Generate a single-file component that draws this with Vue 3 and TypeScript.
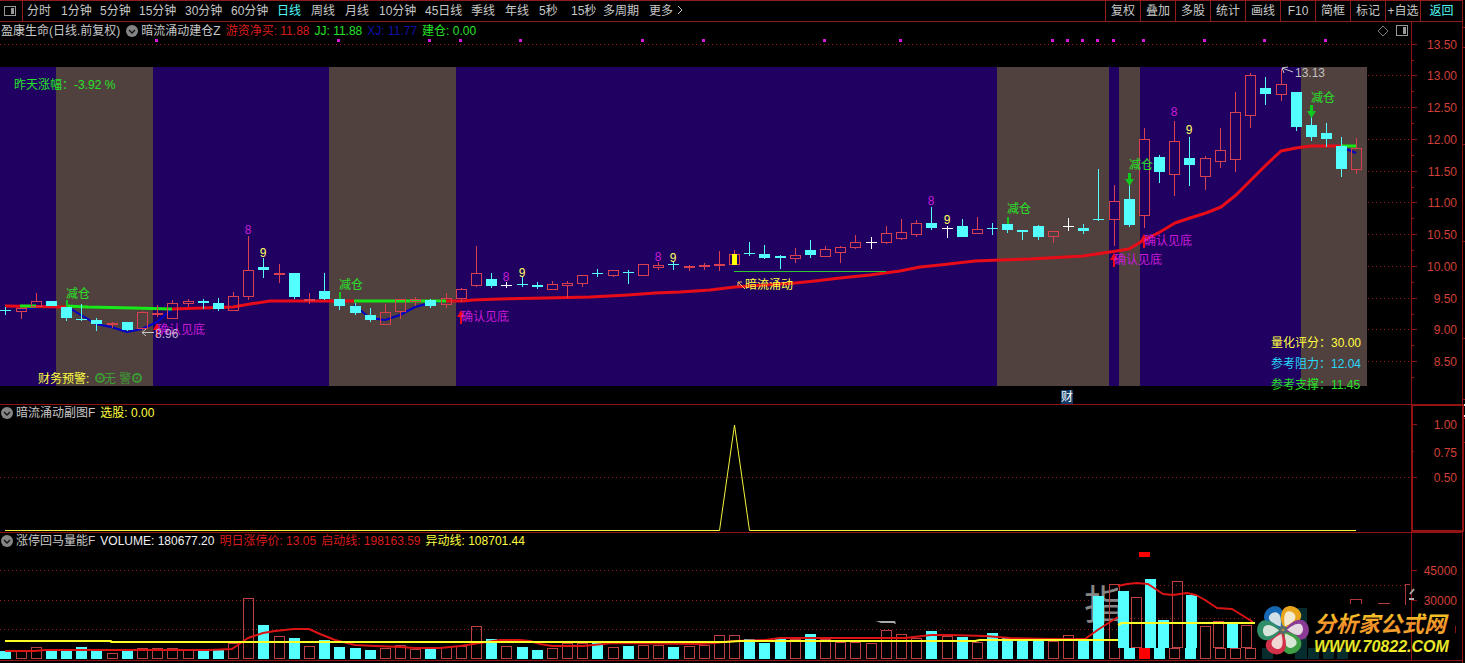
<script setup lang="ts">
type Kind = 'up' | 'down' | 'flat'
type Candle = [kind: Kind, high: number, top: number, bottom: number, low: number]
interface Bar { x: number; top: number; bottom: number; kind: Kind }

const STEP = 15.18
const centre = (i: number): number => Math.round(5.4 + i * STEP)

const periods = [
  { label: '分时', size: 'short' }, { label: '1分钟', size: 'mid' }, { label: '5分钟', size: 'mid' },
  { label: '15分钟', size: 'long' }, { label: '30分钟', size: 'long' }, { label: '60分钟', size: 'long' },
  { label: '日线', size: 'short', active: true }, { label: '周线', size: 'short' }, { label: '月线', size: 'short' },
  { label: '10分钟', size: 'long' }, { label: '45日线', size: 'long' }, { label: '季线', size: 'short' },
  { label: '年线', size: 'short' }, { label: '5秒', size: 'tight' }, { label: '15秒', size: 'tight' },
  { label: '多周期', size: 'long' }, { label: '更多', size: 'more' }
]
const tools = ['复权', '叠加', '多股', '统计', '画线', 'F10', '简框', '标记', '+自选']

const priceAxis = [
  { y: 44, label: '13.50' }, { y: 75, label: '13.00' }, { y: 107, label: '12.50' }, { y: 139, label: '12.00' },
  { y: 171, label: '11.50' }, { y: 202, label: '11.00' }, { y: 234, label: '10.50' }, { y: 266, label: '10.00' },
  { y: 298, label: '9.50' }, { y: 329, label: '9.00' }, { y: 361, label: '8.50' }
]
const bands = [[56, 97], [329, 127], [997, 112], [1119, 21], [1301, 66]]
const signals = [155, 337, 428, 459, 519, 641, 702, 823, 899, 1051, 1066, 1081, 1096, 1112, 1142, 1203, 1263, 1324]

const candles: Candle[] = [
  ['down', 307, 310, 311, 315], ['up', 308, 308, 312, 319], ['up', 293, 301, 307, 307], ['down', 301, 301, 306, 306],
  ['down', 302, 307, 318, 321], ['down', 304, 319, 320, 321], ['down', 318, 320, 324, 331], ['up', 322, 323, 325, 328],
  ['down', 322, 322, 330, 331], ['up', 311, 312, 329, 330], ['up', 305, 313, 315, 317], ['up', 300, 303, 319, 319],
  ['up', 299, 301, 304, 307], ['down', 299, 301, 303, 309], ['down', 298, 303, 309, 311], ['up', 292, 296, 311, 311],
  ['up', 236, 270, 297, 300], ['down', 258, 267, 270, 278], ['up', 264, 273, 275, 283], ['down', 273, 273, 297, 299],
  ['up', 293, 299, 301, 304], ['down', 273, 291, 299, 300], ['down', 292, 299, 306, 310], ['down', 303, 306, 313, 315],
  ['down', 308, 315, 320, 322], ['up', 304, 312, 325, 325], ['up', 299, 299, 312, 319], ['up', 297, 299, 302, 306],
  ['down', 299, 300, 306, 308], ['up', 293, 298, 305, 308], ['up', 288, 289, 299, 302], ['up', 246, 273, 286, 287],
  ['down', 273, 279, 286, 288], ['flat', 282, 285, 286, 288], ['down', 276, 284, 285, 287], ['down', 282, 285, 287, 289],
  ['up', 281, 284, 290, 290], ['up', 281, 283, 286, 298], ['up', 275, 275, 284, 287], ['down', 269, 273, 274, 277],
  ['up', 270, 270, 276, 277], ['down', 270, 272, 273, 284], ['up', 264, 264, 276, 276], ['up', 262, 265, 268, 270],
  ['down', 262, 264, 265, 270], ['up', 265, 266, 268, 271], ['up', 263, 265, 267, 270], ['up', 251, 264, 266, 271],
  ['up', 250, 254, 265, 265], ['down', 242, 253, 254, 256], ['down', 245, 254, 258, 259], ['down', 255, 256, 258, 269],
  ['up', 248, 255, 259, 263], ['down', 240, 250, 255, 258], ['up', 246, 249, 257, 257], ['up', 246, 247, 253, 263],
  ['up', 235, 242, 248, 249], ['flat', 237, 242, 243, 249], ['up', 226, 233, 243, 244], ['up', 219, 232, 239, 240],
  ['up', 220, 223, 235, 237], ['down', 207, 223, 228, 230], ['flat', 226, 228, 229, 238], ['down', 219, 226, 237, 237],
  ['up', 217, 229, 234, 234], ['down', 223, 228, 229, 235], ['down', 220, 224, 230, 233], ['down', 230, 230, 232, 240],
  ['down', 225, 226, 237, 240], ['up', 231, 231, 237, 243], ['flat', 218, 226, 227, 231], ['down', 224, 228, 231, 234],
  ['down', 169, 219, 220, 221], ['up', 185, 201, 220, 246], ['down', 173, 199, 225, 227], ['up', 128, 139, 216, 228],
  ['down', 155, 157, 172, 183], ['up', 121, 141, 175, 196], ['down', 137, 158, 165, 186], ['up', 156, 158, 177, 190],
  ['up', 128, 150, 162, 168], ['up', 92, 112, 160, 172], ['up', 73, 75, 116, 128], ['down', 77, 88, 94, 105],
  ['up', 69, 84, 95, 101], ['down', 92, 92, 127, 131], ['down', 117, 125, 137, 141], ['down', 123, 133, 139, 147],
  ['down', 137, 146, 169, 177], ['up', 138, 148, 170, 174]
]

const counts = [
  { i: 16, y: 234, n: 8 }, { i: 17, y: 257, n: 9 }, { i: 33, y: 281, n: 8 }, { i: 34, y: 277, n: 9 },
  { i: 43, y: 261, n: 8 }, { i: 44, y: 262, n: 9 }, { i: 61, y: 205, n: 8 }, { i: 62, y: 224, n: 9 },
  { i: 77, y: 116, n: 8 }, { i: 78, y: 134, n: 9 }
]
const sells = [
  { x: 66, y: 298, tip: 307 }, { x: 339, y: 289, tip: 299 }, { x: 1007, y: 213, tip: 224 },
  { x: 1129, y: 169, tip: 186 }, { x: 1311, y: 102, tip: 118 }
]
const bottoms = [{ x: 157, y: 334 }, { x: 461, y: 321 }, { x: 1114, y: 264 }, { x: 1144, y: 245 }]
const scores = [
  { y: 347, label: '量化评分：', value: '30.00', tone: 'yellow' },
  { y: 368, label: '参考阻力：', value: '12.04', tone: 'aqua' },
  { y: 389, label: '参考支撑：', value: '11.45', tone: 'green' }
]

const trendRed = 'M5,306 L66,307 M172,309 L233,307 250,304 270,301 300,301 354,301 M446,301 L463,301 473,300 500,299 545,298 590,297 628,295 655,293 680,292 710,290 735,287 765,285 795,283 815,281 840,278 870,275 885,273 900,271 920,267 940,265 975,261 1000,260 1030,259 1083,256 1110,252 1129,249 1144,240 1160,232 1175,223 1190,218 1206,213 1221,207 1236,195 1251,180 1266,165 1281,151 1296,148 1311,146 1341,146'
const trendGreen = 'M20,306 L36,306 M66,306 L88,307 133,308 172,309 M354,301 L446,301 M1341,146 L1356,146'
const trendBlue = 'M20,309 L51,306 M66,306 L81,315 96,324 111,327 127,332 142,329 157,322 172,309 M354,305 L370,318 385,320 400,315 415,307 430,303 446,301 M1341,147 L1356,153'

const volumes = 'd651 u651 u647 d651 d650 d647 d650 u653 d651 u648 u648 u648 u650 d650 d650 u643 u598 d625 u636 d638 u646 d640 d647 d648 d650 u648 u645 u649 d649 u647 u646 u626 d639 u646 d647 d650 u648 u643 u643 d643 u647 d646 u645 u645 d647 u646 u645 u635 u635 d639 d643 d639 u639 d634 u639 u642 u642 u643 u630 u634 u638 d631 u636 d637 u642 d633 d638 d640 d640 u641 u635 d641 d596 u584'
const bars: Bar[] = volumes.split(' ').map((v, i) => ({
  x: centre(i) - 5, top: Number(v.slice(1)), bottom: 659, kind: v[0] === 'd' ? 'down' : 'up'
}))
const surge: Bar[] = [
  { x: 1118, top: 591, bottom: 648, kind: 'down' }, { x: 1131, top: 597, bottom: 648, kind: 'up' },
  { x: 1145, top: 579, bottom: 648, kind: 'down' }, { x: 1158, top: 620, bottom: 648, kind: 'down' },
  { x: 1172, top: 581, bottom: 648, kind: 'up' }, { x: 1186, top: 595, bottom: 648, kind: 'down' },
  { x: 1200, top: 626, bottom: 659, kind: 'up' }, { x: 1213, top: 621, bottom: 648, kind: 'up' },
  { x: 1227, top: 624, bottom: 648, kind: 'down' }, { x: 1241, top: 625, bottom: 648, kind: 'up' },
  { x: 1124, top: 648, bottom: 659, kind: 'down' }, { x: 1154, top: 648, bottom: 659, kind: 'down' },
  { x: 1169, top: 648, bottom: 659, kind: 'up' }, { x: 1185, top: 648, bottom: 659, kind: 'down' },
  { x: 1215, top: 648, bottom: 659, kind: 'up' }, { x: 1230, top: 648, bottom: 659, kind: 'up' },
  { x: 1245, top: 648, bottom: 659, kind: 'up' }
]
const petals = [
  { angle: -34, fill: '#1668b4' }, { angle: 28, fill: '#e8a51c' }, { angle: 88, fill: '#8a3a94' },
  { angle: 148, fill: '#3f9d45' }, { angle: 204, fill: '#d3304a' }, { angle: 268, fill: '#2f8d68' }
]
</script>

<template>
  <main class="terminal">
    <nav class="toolbar" aria-label="周期">
      <button class="layout" aria-label="布局">
        <svg width="12" height="10" viewBox="0 0 12 10" class="crisp">
          <rect x=".5" y=".5" width="11" height="9" fill="none" stroke="#999" />
          <rect x="7" y="2" width="3" height="6" fill="#999" />
        </svg>
      </button>
      <div class="periods">
        <button v-for="p in periods" :key="p.label" :class="[p.size, { active: p.active }]">
          {{ p.label }}<svg v-if="p.size === 'more'" width="6" height="10" viewBox="0 0 6 10"><path d="M1 1l4 4-4 4" fill="none" stroke="#c8c8c8" /></svg>
        </button>
      </div>
      <div class="tools">
        <button v-for="t in tools" :key="t">{{ t }}</button>
        <button class="back active">返回</button>
      </div>
    </nav>

    <section class="panel">
      <header class="legend">
        <span class="stock">盈康生命(日线.前复权)</span>
        <svg class="toggle" width="12" height="12" viewBox="0 0 12 12"><circle cx="6" cy="6" r="6" fill="#858585" /><path d="M3 5l3 3 3-3" fill="none" stroke="#111" stroke-width="1.4" /></svg>
        <span>暗流涌动建仓Z</span>
        <span class="red">游资净买: 11.88</span>
        <span class="green">JJ: 11.88</span>
        <span class="blue">XJ: 11.77</span>
        <span class="green">建仓: 0.00</span>
        <span class="marks">
          <svg width="12" height="12" viewBox="0 0 12 12"><path d="M6 1l5 5-5 5-5-5z" fill="none" stroke="#777" /></svg>
          <svg width="12" height="11" viewBox="0 0 12 11" class="crisp"><rect x=".5" y=".5" width="11" height="10" fill="none" stroke="#999" /><rect x="7" y="2" width="3" height="7" fill="#999" /></svg>
        </span>
      </header>
      <svg class="chart" viewBox="0 22 1465 382" role="img" aria-label="日线">
        <g class="crisp">
          <path v-for="a in priceAxis" :key="a.y" class="grid" :d="`M0 ${a.y + .5}H1411`" />
          <rect x="0" y="67" width="1367" height="319" fill="#200060" />
          <rect v-for="b in bands" :key="b[0]" :x="b[0]" y="67" :width="b[1]" height="319" fill="#50403e" />
          <rect v-for="s in signals" :key="s" :x="s" y="39" width="3" height="3" fill="#d818d8" />
          <path class="axis" d="M1411.5 22V404M1462.5 22V404M1463 27.5h2M1463 47.5h2M1463 144.5h2M1463 241.5h2M1463 338.5h2M1463 399.5h2" />
          <path v-for="a in priceAxis" :key="a.label" class="axis" :d="`M1411 ${a.y + .5}h6M1411 ${a.y + 16.5}h3`" />
        </g>
        <path :d="trendBlue" class="line" stroke="#0000c8" stroke-width="2" />
        <path :d="trendRed" class="line" stroke="#e80c18" stroke-width="3" />
        <path :d="trendGreen" class="line" stroke="#18e818" stroke-width="3" />
        <rect x="734" y="271" width="152" height="1" fill="#30c830" class="crisp" />

        <g v-for="(c, i) in candles" :key="i" :class="['crisp', c[0]]">
          <path :d="`M${centre(i) + .5} ${c[1]}V${c[2]}M${centre(i) + .5} ${c[3]}V${c[4]}`" />
          <rect v-if="c[0] === 'up' && c[3] - c[2] > 2" :x="centre(i) - 4.5" :y="c[2] + .5" width="10" :height="c[3] - c[2] - 1" fill="none" />
          <rect v-else class="solid" :x="centre(i) - 5" :y="c[2]" width="11" :height="c[3] - c[2]" />
        </g>
        <rect x="732" y="254" width="5" height="11" fill="#ffff00" class="crisp" />

        <g v-for="s in sells" :key="s.x" class="green">
          <path v-if="s.tip - s.y > 12" :d="`M${s.x - 4} ${s.tip - 7}h9l-4.5 7zM${s.x - 1} ${s.tip - 13}h3v6h-3z`" fill="#10c820" />
          <path v-else :d="`M${s.x} ${s.tip - 7}h2v7h-2z`" fill="#10c820" />
          <text :x="s.x" :y="s.y">减仓</text>
        </g>
        <g v-for="b in bottoms" :key="b.x">
          <path :d="`M${b.x} ${b.y - 11}l4 7h-3v7h-2v-7h-3z`" fill="#f00818" />
          <text :x="b.x" :y="b.y" fill="#c81cd8">确认见底</text>
        </g>
        <text v-for="c in counts" :key="c.i" :x="centre(c.i)" :y="c.y" text-anchor="middle" :fill="c.n === 8 ? '#c81cd8' : '#ffff60'">{{ c.n }}</text>

        <path d="M142 332.5H154M146 329l-4 3.5 4 3.5M1293 72l-11-4 6-1M1282 68l2 5" fill="none" stroke="#c8c8c8" />
        <text x="155" y="338" fill="#c8b8d0">8.96</text>
        <text x="1295" y="77" fill="#c0c0c0">13.13</text>
        <path d="M745 289l-7-7M738 286v-4h4" fill="none" stroke="#f0c060" />
        <text x="745" y="289" class="yellow">暗流涌动</text>
        <text x="14" y="89" class="green">昨天涨幅：-3.92 %</text>
        <text x="38" y="383" class="yellow">财务预警:</text>
        <g fill="none" stroke="#3c9c34"><circle cx="100" cy="378" r="4" stroke-width="2" /><circle cx="100" cy="378" r="1" /><circle cx="137" cy="378" r="4" stroke-width="2" /><circle cx="137" cy="378" r="1" /></g>
        <text x="104" y="383" fill="#3c9c34">无 警</text>
        <text v-for="s in scores" :key="s.y" x="1271" :y="s.y" :class="s.tone">{{ s.label }}{{ s.value }}</text>
        <rect x="1061" y="390" width="12" height="14" fill="#123c68" />
        <text x="1061" y="401" fill="#fff">财</text>
        <text v-for="a in priceAxis" :key="a.label" x="1457" :y="a.y + 5" class="tick">{{ a.label }}</text>
      </svg>
    </section>

    <section class="panel">
      <header class="legend">
        <svg class="toggle" width="12" height="12" viewBox="0 0 12 12"><circle cx="6" cy="6" r="6" fill="#858585" /><path d="M3 5l3 3 3-3" fill="none" stroke="#111" stroke-width="1.4" /></svg>
        <span>暗流涌动副图F</span>
        <span class="yellow">选股: 0.00</span>
      </header>
      <svg class="chart" viewBox="0 404 1465 128" role="img" aria-label="选股">
        <g class="crisp">
          <path class="axis" d="M0 404.5H1411M1411 424.5h6M1411 451.5h3M1411 477.5h6M1463 418.5h2M1463 442.5h2" />
          <path class="grid" d="M0 477.5H1411" />
          <rect x="1412" y="405" width="51" height="126" fill="none" stroke="#941414" stroke-width="2" />
          <path d="M1464 404v2M1464 415v2" stroke="#ddd" />
        </g>
        <path d="M5 530.5H719.5L734.5 425L749.5 530.5H1356" fill="none" stroke="#f4f43c" />
        <text x="1457" y="429" class="tick">1.00</text>
        <text x="1457" y="457" class="tick">0.75</text>
        <text x="1457" y="482" class="tick">0.50</text>
      </svg>
    </section>

    <section class="panel">
      <header class="legend">
        <svg class="toggle" width="12" height="12" viewBox="0 0 12 12"><circle cx="6" cy="6" r="6" fill="#858585" /><path d="M3 5l3 3 3-3" fill="none" stroke="#111" stroke-width="1.4" /></svg>
        <span>涨停回马量能F</span>
        <span class="white">VOLUME: 180677.20</span>
        <span class="red">明日涨停价: 13.05</span>
        <span class="red">启动线: 198163.59</span>
        <span class="yellow">异动线: 108701.44</span>
      </header>
      <svg class="chart" viewBox="0 532 1465 131" role="img" aria-label="成交量">
        <defs>
          <clipPath id="mark"><rect x="1080" y="575" width="38" height="55" /></clipPath>
          <linearGradient id="gold" x1="0" y1="0" x2="0" y2="1"><stop offset="0" stop-color="#f6d024" /><stop offset=".55" stop-color="#f08a2c" /><stop offset="1" stop-color="#f5b62c" /></linearGradient>
          <linearGradient id="lime" x1="0" y1="0" x2="0" y2="1"><stop offset="0" stop-color="#d8e020" /><stop offset="1" stop-color="#fff030" /></linearGradient>
        </defs>
        <g class="crisp">
          <path class="grid" d="M0 570.5H1118M0 600.5H1118M0 629.5H1118M1156 585.5H1408M1118 618.5H1255" />
          <path class="axis" d="M0 532.5H1463M0 660.5H1463M1411.5 532V660M1462.5 532V663M1411 570.5h6M1411 600.5h6M1455.5 626v7" />
        </g>
        <text x="1084" y="619" class="mark" clip-path="url(#mark)">指</text>
        <g v-for="(b, i) in [...bars, ...surge]" :key="i" :class="['crisp', 'volume', b.kind]">
          <rect v-if="b.kind === 'down'" class="solid" :x="b.x" :y="b.top" width="11" :height="b.bottom - b.top" />
          <rect v-else :x="b.x + .5" :y="b.top + .5" width="10" :height="b.bottom - b.top - 1" fill="none" />
        </g>
        <g class="crisp" fill="#ff0000"><rect x="1139" y="552" width="11" height="5" /><rect x="1139" y="648" width="11" height="11" /></g>
        <path class="line" stroke="#dc1414" stroke-width="2" d="M5 651L35 651 45 650 210 650 232 649 248 638 263 633 275 631 294 629 309 629 320 634 335 640 355 645 375 646 400 647 415 648 440 648 460 646 480 643 500 640 520 640 530 641 540 644 552 646 583 646 613 643 700 644 715 643 734 641 765 640 780 638 905 638 931 635 950 635 985 636 1010 638 1053 639 1085 639 1099 629 1118 617M1118 586L1127 584 1137 583 1148 584 1163 594 1173 595 1187 593 1196 595 1205 600 1217 608 1232 609 1253 622" />
        <path class="line" stroke="#ffff28" stroke-width="2" d="M5 641H111V642H725L740 641H975L980 640H1118M1118 625L1122 623H1255" />
        <path d="M876 621h19l1 3-3-1h-12z" fill="#aaa" />
        <path d="M1350.5 604v-5h11v5M1378.5 604v-1h11v1M1410 584.5h-5v20" fill="none" stroke="#b03838" class="crisp" />
        <path d="M1410 594l4-5M1409 599h5" stroke="#aaa" stroke-width="2" />
        <g class="crisp" fill="#072c2e"><rect x="1262" y="648" width="11" height="11" /><rect x="1295" y="608" width="12" height="51" /><rect x="1308" y="648" width="11" height="11" /><rect x="1323" y="648" width="11" height="11" /><rect x="1337" y="648" width="11" height="11" /></g>
        <g transform="translate(1283 630)">
          <g v-for="p in petals" :key="p.angle" :transform="`rotate(${p.angle})`">
            <path d="M0-2C-8-7-13-18-7-23C-3-27 5-27 9-22C13-16 7-7 0-2Z" :fill="p.fill" />
            <path d="M0-4C-4-9-8-16-4-19C-1-21 4-20 5-17C7-13 3-8 0-4Z" fill="#f4f4ee" opacity=".85" />
          </g>
          <circle r="4" fill="#58706c" /><circle r="1" fill="#e0a040" />
        </g>
        <text x="1314" y="632" class="brand" fill="url(#gold)">分析家公式网</text>
        <text x="1314" y="652" class="site" fill="url(#lime)">WWW.70822.COM</text>
        <text x="1457" y="575" class="tick">45000</text>
        <text x="1457" y="605" class="tick">30000</text>
      </svg>
    </section>
  </main>
</template>

<style>
body { margin: 0; background: #000; }
</style>

<style scoped>
.terminal {
  background: #000;
  color: #c8c8c8;
  font: 12px/18px "Liberation Sans", "Noto Sans CJK SC", sans-serif;
}
.toolbar {
  display: flex;
  box-sizing: border-box;
  height: 22px;
  margin-right: 2px;
  border: solid #901c1c;
  border-width: 1px 1px 1px 0;
}
button {
  padding: 0;
  border: 0;
  background: none;
  color: inherit;
  font: inherit;
  line-height: 20px;
  white-space: nowrap;
  cursor: pointer;
}
.layout {
  display: flex;
  box-sizing: border-box;
  align-items: center;
  width: 23px;
  padding-left: 4px;
  border-right: 1px solid #901c1c;
}
.periods { display: flex; flex: 1; padding-left: 4px; overflow: hidden; }
.periods button { flex: none; text-align: left; }
.periods .tight { width: 32px; }
.periods .short { width: 34px; }
.periods .mid { width: 39px; }
.periods .long { width: 46px; }
.periods .more svg { margin-left: 4px; }
button.active { color: #50f8f8; }
.tools { display: flex; }
.tools button { box-sizing: border-box; width: 35px; border-left: 1px solid #901c1c; }
.tools .back { width: 42px; }
.panel { display: grid; }
.panel > * { grid-area: 1 / 1; }
.legend {
  display: flex;
  z-index: 1;
  align-self: start;
  gap: 5px;
  align-items: center;
  padding: 0 57px 0 1px;
  white-space: nowrap;
}
.toggle { flex: none; margin-right: -2px; }
.stock { margin-right: 1px; }
.marks { display: flex; gap: 7px; margin-left: auto; }
.chart { display: block; width: 100%; height: auto; }
.crisp { shape-rendering: crispEdges; }
.grid { stroke: #a01c1c; stroke-dasharray: 1 3; }
.axis { stroke: #901414; fill: none; }
.line { fill: none; stroke-linejoin: round; }
.up { stroke: #d84050; }
.up .solid { fill: #d84050; stroke: none; }
.down { stroke: #54ffff; }
.down .solid { fill: #54ffff; stroke: none; }
.flat { stroke: #fff; }
.flat .solid { fill: #fff; stroke: none; }
.volume.up { stroke: #bc4040; }
.tick { fill: #d04038; text-anchor: end; }
.red { color: #d81c1c; fill: #d81c1c; }
.green { color: #28e028; fill: #28e028; }
.blue { color: #1010a8; }
.yellow { color: #ffff40; fill: #ffff40; }
.aqua { fill: #28d8f8; }
.white { color: #f0f0f0; }
.mark { font-size: 40px; fill: #858585; }
.brand { font-size: 22px; font-weight: 700; font-style: italic; }
.site { font-size: 16px; font-weight: 700; font-style: italic; }
</style>
